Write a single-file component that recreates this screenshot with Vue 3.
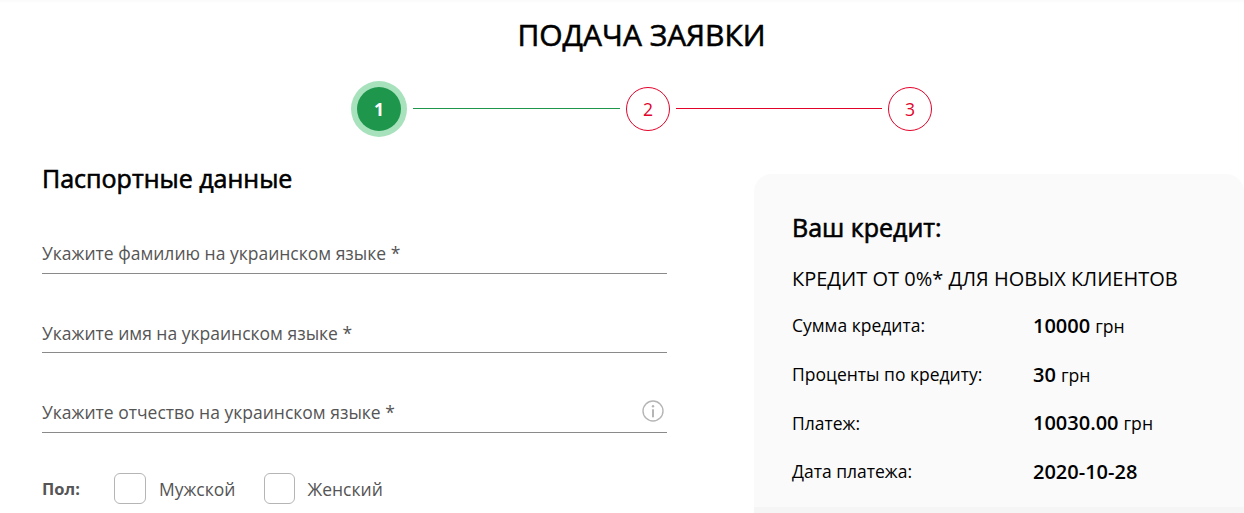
<script setup>
const fields = [
  { label: 'Укажите фамилию на украинском языке *', info: false },
  { label: 'Укажите имя на украинском языке *', info: false },
  { label: 'Укажите отчество на украинском языке *', info: true }
]
const rows = [
  { k: 'Сумма кредита:', v: '10000', u: 'грн' },
  { k: 'Проценты по кредиту:', v: '30', u: 'грн' },
  { k: 'Платеж:', v: '10030.00', u: 'грн' },
  { k: 'Дата платежа:', v: '2020-10-28', u: '' }
]
</script>

<template>
  <div class="page">
    <h1 class="title">ПОДАЧА ЗАЯВКИ</h1>
    <div class="stepper">
      <div class="step active">1</div>
      <div class="line green"></div>
      <div class="step">2</div>
      <div class="line red"></div>
      <div class="step">3</div>
    </div>
    <div class="columns">
      <section class="form">
        <h2 class="heading">Паспортные данные</h2>
        <div v-for="f in fields" :key="f.label" class="field">
          <span>{{ f.label }}</span>
          <svg v-if="f.info" class="info" viewBox="0 0 22 22" width="22" height="22">
            <circle cx="11" cy="11" r="10" fill="none" stroke="#b5b5b5" stroke-width="1.4" />
            <circle cx="11" cy="6.3" r="1.2" fill="#b5b5b5" />
            <rect x="10" y="9.3" width="2" height="8" fill="#b5b5b5" />
          </svg>
        </div>
        <div class="gender">
          <b class="gender-label">Пол:</b>
          <label class="check male"><i class="box"></i>Мужской</label>
          <label class="check female"><i class="box"></i>Женский</label>
        </div>
      </section>
      <aside class="card">
        <h3 class="card-title">Ваш кредит:</h3>
        <p class="card-sub">КРЕДИТ ОТ 0%* ДЛЯ НОВЫХ КЛИЕНТОВ</p>
        <div v-for="r in rows" :key="r.k" class="row">
          <span class="key">{{ r.k }}</span>
          <span class="val"><b>{{ r.v }}</b><span v-if="r.u" class="unit">{{ r.u }}</span></span>
        </div>
      </aside>
    </div>
  </div>
</template>

<style scoped>
.page {
  height: 513px;
  overflow: hidden;
  font-family: "Open Sans", sans-serif;
  color: #000;
  background: linear-gradient(#fbfbfb, #fff 4px);
}
.title {
  margin: 0 0 0 39px;
  padding-top: 14px;
  height: 66px;
  box-sizing: border-box;
  text-align: center;
  font-size: 30px;
  line-height: 41px;
  font-weight: 400;
  -webkit-text-stroke: 0.6px #000;
}
.stepper {
  display: flex;
  align-items: center;
  margin: 14px 0 0 351px;
  height: 57px;
}
.step {
  width: 44px;
  height: 44px;
  box-sizing: border-box;
  border: 1px solid #e3022a;
  border-radius: 50%;
  display: flex;
  align-items: center;
  justify-content: center;
  color: #e3022a;
  font-size: 17.6px;
}
.step.active {
  margin: 0 6px;
  border: 0;
  background: #1e974c;
  color: #fff;
  font-weight: 700;
  box-shadow: 0 0 0 6px #a8e2bd;
}
.line { height: 1px; }
.line.green { width: 207px; background: #1e974c; margin: 0 6px; }
.line.red { width: 206px; background: #e3022a; margin: 0 6px; }
.columns { display: flex; }
.form {
  width: 625px;
  margin-left: 42px;
  flex: none;
}
.heading {
  margin: 0;
  padding-top: 25px;
  font-size: 25px;
  line-height: 33px;
  font-weight: 400;
  -webkit-text-stroke: 0.6px #000;
}
.field {
  display: flex;
  align-items: center;
  justify-content: space-between;
  height: 40px;
  margin-top: 39.4px;
  box-sizing: border-box;
  border-bottom: 1px solid #8a8a8a;
  color: #555;
  font-size: 17.5px;
  padding-bottom: 0;
}
.form .heading + .field { margin-top: 38.8px; }
.info { margin-right: 3px; margin-bottom: 2px; }
.gender {
  display: flex;
  align-items: center;
  margin-top: 40.6px;
  color: #555;
  font-size: 17.5px;
}
.gender-label {
  width: 72px;
  font-size: 16.5px;
  font-weight: 700;
}
.check {
  display: flex;
  align-items: center;
  gap: 13px;
}
.male { margin-right: 29px; }
.box {
  width: 32px;
  height: 31px;
  box-sizing: border-box;
  border: 1px solid #b5b5b5;
  border-radius: 6px;
  background: #fff;
}
.female .box { width: 31px; }
.female { gap: 12px; }
.card {
  margin-left: 87px;
  margin-top: 37px;
  flex: 1;
  height: 340px;
  box-sizing: border-box;
  padding: 37px 0 0 38px;
  border-radius: 18px 18px 0 0;
  background: linear-gradient(#fafafa 333px, #f5f5f5 333px);
}
.card-title {
  margin: 0;
  font-size: 25px;
  line-height: 33px;
  font-weight: 400;
  -webkit-text-stroke: 0.6px #000;
}
.card-sub {
  margin: 21px 0 9px;
  font-size: 20px;
  line-height: 27px;
  font-weight: 400;
}
.row {
  display: flex;
  align-items: center;
  height: 48.7px;
}
.key {
  width: 241px;
  font-size: 17.5px;
}
.val { font-size: 17.6px; }
.val b { font-size: 20px; font-weight: 600; }
.unit { margin-left: 5px; }
</style>

<style>
html, body { margin: 0; background: #fff; }
</style>
